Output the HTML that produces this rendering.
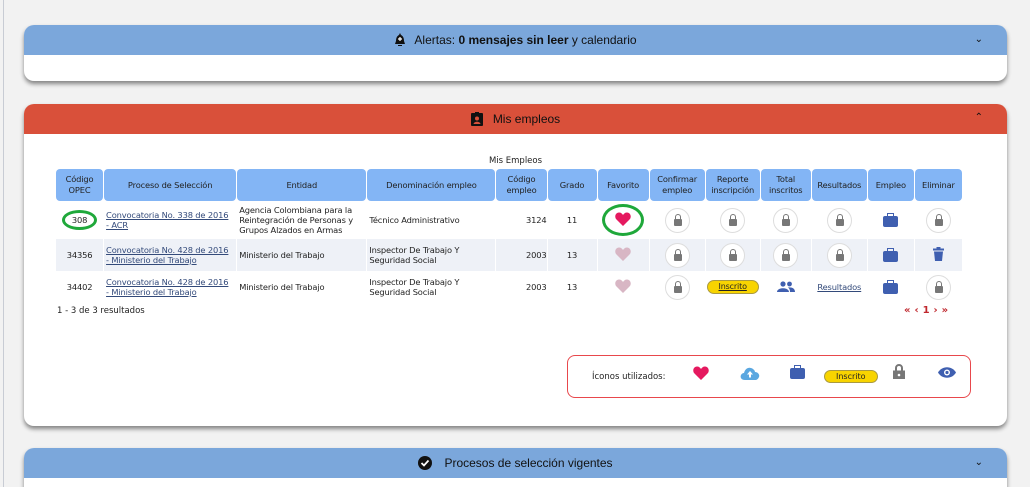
<!DOCTYPE html>
<html style="overflow:hidden;width:1030px;height:487px"><head><meta charset="utf-8"><style>
*{margin:0;padding:0;box-sizing:border-box}
body{width:1030px;height:487px;background:#f2f2f2;font-family:"DejaVu Sans","Liberation Sans",sans-serif;position:relative;overflow:hidden;color:#222}
.lb{position:absolute;left:3px;top:0;width:1px;height:487px;background:#c8ccd4}
.panel{position:absolute;left:24px;width:983px;background:#fff;border-radius:10px;box-shadow:0 3px 4px rgba(0,0,0,.45);overflow:hidden}
.hd{height:30px;display:flex;align-items:center;justify-content:center;font-family:"Liberation Sans",sans-serif;font-size:12px;position:relative;color:#111}
.hd .car{position:absolute;right:24px;top:9px;font-size:10px}
table{position:absolute;left:55px;top:169px;border-collapse:separate;border-spacing:1px 0;font-size:8.3px;letter-spacing:-0.15px;table-layout:fixed;width:908px}
th{background:#83b5f5;font-weight:normal;height:32px;border-radius:4px;line-height:11px;color:#222}
td{text-align:center;line-height:10px;overflow:hidden;white-space:nowrap}
td.l{text-align:left;padding-left:2px}
td.w{white-space:normal}
a{color:#334a7a}
.lk{display:inline-block;width:25px;height:25px;border-radius:50%;border:1px solid #ddd;position:relative;vertical-align:middle;background:#fff}
.lk:after{content:"";position:absolute;left:8px;top:10px;width:8px;height:7px;background:#777;border-radius:1px}
.lk:before{content:"";position:absolute;left:9px;top:5px;width:4px;height:6px;border:1.5px solid #777;border-bottom:none;border-radius:3px 3px 0 0}
.bag{display:inline-block;width:15px;height:11px;background:#3f5fb0;border-radius:2px;position:relative;vertical-align:middle;margin-top:3px}
.bag:before{content:"";position:absolute;left:4px;top:-3px;width:5px;height:3px;border:1.5px solid #3f5fb0;border-bottom:none}
.ins{display:inline-block;background:#f8d400;border:1px solid #aa9a40;border-radius:8px;padding:1px 11px;font-size:8px}
tr.g td{background:#eef1f7}
</style></head><body>
<div class="lb"></div>
<div class="panel" style="top:25px;height:56px"><div class="hd" style="background:#7ba7db">
<svg width="12" height="14" viewBox="0 0 12 14" style="margin-right:8px"><path d="M6 0 L7 2 C9 3 10 5 10 8 L11 11 L1 11 L2 8 C2 5 3 3 5 2Z M4 12 h4 v1 h-4z" fill="#111"/><path d="M6 4v4M4 6h4" stroke="#fff" stroke-width="1.2"/></svg>
Alertas:&nbsp;<b>0 mensajes sin leer</b>&nbsp;y calendario<span class="car">&#8964;</span></div></div>

<div class="panel" style="top:104px;height:322px"><div class="hd" style="background:#d9503a">
<svg width="12" height="14" viewBox="0 0 12 14" style="margin-right:10px"><rect x="0" y="1" width="12" height="13" rx="1" fill="#111"/><rect x="4" y="0" width="4" height="3" fill="#111"/><circle cx="6" cy="6.5" r="2" fill="#d9503a"/><path d="M2.5 12 C3 9 9 9 9.5 12Z" fill="#d9503a"/></svg>
Mis empleos<span class="car" style="top:8px">&#8963;</span></div>
<div style="position:absolute;left:0;width:983px;top:52px;text-align:center;font-size:8.5px">Mis Empleos</div>
<div style="position:absolute;left:33px;top:202px;font-size:8.5px">1 - 3 de 3 resultados</div>
<div style="position:absolute;left:880px;top:201px;font-size:10px;color:#c0282e;font-weight:bold;letter-spacing:4px">«‹1›»</div>
<div style="position:absolute;left:543px;top:251px;width:404px;height:43px;border:1px solid #e8484c;border-radius:8px;font-size:8.5px">
<span style="position:absolute;left:24px;top:16px">Íconos utilizados:</span>
<svg style="position:absolute;left:125px;top:10px" width="16" height="14" viewBox="0 0 16 14"><path d="M8 14 L1.5 7.5 C-1 5 0.5 0.5 4 0.5 C6 0.5 7 1.5 8 3 C9 1.5 10 0.5 12 0.5 C15.5 0.5 17 5 14.5 7.5Z" fill="#e5195f"/></svg>
<svg style="position:absolute;left:172px;top:11px" width="20" height="13" viewBox="0 0 20 13"><path d="M5 13 C1 13 0 10 1 8 C2 6 4 6 4 6 C5 2 8 0 11 1 C14 2 15 4 15 5 C18 5 20 8 19 10 C18 12 17 13 15 13Z" fill="#5aa7e0"/><path d="M10 4 L13 7.5 H11 V10.5 H9 V7.5 H7Z" fill="#fff"/></svg>
<span class="bag" style="position:absolute;left:222px;top:9px"></span>
<span class="ins" style="position:absolute;left:256px;top:14px">Inscrito</span>
<svg style="position:absolute;left:325px;top:8px" width="12" height="15" viewBox="0 0 12 15"><path d="M3 7 V4 a3 3 0 0 1 6 0 V7" fill="none" stroke="#777" stroke-width="2"/><rect x="0" y="6.5" width="12" height="8.5" fill="#777"/><circle cx="6" cy="11" r="1.3" fill="#fff"/></svg>
<svg style="position:absolute;left:370px;top:11px" width="18" height="11" viewBox="0 0 18 11"><path d="M0 5.5 C4 -1.5 14 -1.5 18 5.5 C14 12.5 4 12.5 0 5.5Z" fill="#3f5fb0"/><circle cx="9" cy="5.5" r="3" fill="#fff"/><circle cx="9" cy="5.5" r="1.6" fill="#3f5fb0"/></svg>
</div>
</div>

<table>
<colgroup><col style="width:47px"><col style="width:132px"><col style="width:129px"><col style="width:128px"><col style="width:50px"><col style="width:49px"><col style="width:51px"><col style="width:55px"><col style="width:54px"><col style="width:50px"><col style="width:55px"><col style="width:46px"><col style="width:47px"></colgroup>
<tr><th>Código<br>OPEC</th><th>Proceso de Selección</th><th>Entidad</th><th>Denominación empleo</th><th>Código<br>empleo</th><th>Grado</th><th>Favorito</th><th>Confirmar<br>empleo</th><th>Reporte<br>inscripción</th><th>Total<br>inscritos</th><th>Resultados</th><th>Empleo</th><th>Eliminar</th></tr>
<tr style="height:38px"><td><span style="display:inline-block;border:3px solid #1fa83a;border-radius:50%;padding:2px 7px">308</span></td><td class="l"><a href="#">Convocatoria No. 338 de 2016<br>- ACR</a></td><td class="l w">Agencia Colombiana para la Reintegración de Personas y Grupos Alzados en Armas</td><td class="l">Técnico Administrativo</td><td style="text-align:right">3124</td><td>11</td><td><span style="display:inline-block;border:3px solid #1fa83a;border-radius:50%;padding:5px 10px"><svg width="16" height="14" viewBox="0 0 16 14"><path d="M8 14 L1.5 7.5 C-1 5 0.5 0.5 4 0.5 C6 0.5 7 1.5 8 3 C9 1.5 10 0.5 12 0.5 C15.5 0.5 17 5 14.5 7.5Z" fill="#e5195f"/></svg></span></td><td><span class="lk"></span></td><td><span class="lk"></span></td><td><span class="lk"></span></td><td><span class="lk"></span></td><td><span class="bag"></span></td><td><span class="lk"></span></td></tr>
<tr class="g" style="height:32px"><td>34356</td><td class="l"><a href="#">Convocatoria No. 428 de 2016<br>- Ministerio del Trabajo</a></td><td class="l">Ministerio del Trabajo</td><td class="l">Inspector De Trabajo Y<br>Seguridad Social</td><td style="text-align:right">2003</td><td>13</td><td><svg width="16" height="14" viewBox="0 0 16 14"><path d="M8 14 L1.5 7.5 C-1 5 0.5 0.5 4 0.5 C6 0.5 7 1.5 8 3 C9 1.5 10 0.5 12 0.5 C15.5 0.5 17 5 14.5 7.5Z" fill="#d8b6c4"/></svg></td><td><span class="lk"></span></td><td><span class="lk"></span></td><td><span class="lk"></span></td><td><span class="lk"></span></td><td><span class="bag"></span></td><td><svg width="11" height="14" viewBox="0 0 11 14"><rect x="0" y="1.5" width="11" height="2" fill="#3f5fb0"/><rect x="3.5" y="0" width="4" height="2" fill="#3f5fb0"/><path d="M1 4.5 H10 L9 14 H2Z" fill="#3f5fb0"/></svg></td></tr>
<tr style="height:32px"><td>34402</td><td class="l"><a href="#">Convocatoria No. 428 de 2016<br>- Ministerio del Trabajo</a></td><td class="l">Ministerio del Trabajo</td><td class="l">Inspector De Trabajo Y<br>Seguridad Social</td><td style="text-align:right">2003</td><td>13</td><td><svg width="16" height="14" viewBox="0 0 16 14"><path d="M8 14 L1.5 7.5 C-1 5 0.5 0.5 4 0.5 C6 0.5 7 1.5 8 3 C9 1.5 10 0.5 12 0.5 C15.5 0.5 17 5 14.5 7.5Z" fill="#d8b6c4"/></svg></td><td><span class="lk"></span></td><td><span class="ins"><u>Inscrito</u></span></td><td><svg width="18" height="11" viewBox="0 0 18 11"><circle cx="6" cy="3" r="2.6" fill="#3f5fb0"/><circle cx="12.5" cy="3" r="2.4" fill="#3f5fb0"/><path d="M0 11 C0 6 12 6 12 11Z M11 6.5 C15 6 18 7.5 18 11 H13 C13 9 12.5 7.5 11 6.5Z" fill="#3f5fb0"/></svg></td><td><a href="#">Resultados</a></td><td><span class="bag"></span></td><td><span class="lk"></span></td></tr>
</table>

<div class="panel" style="top:448px;height:60px"><div class="hd" style="background:#7ba7db">
<svg width="14" height="14" viewBox="0 0 14 14" style="margin-right:12px"><circle cx="7" cy="7" r="7" fill="#111"/><path d="M3.5 7 L6 9.5 L10.5 4.5" stroke="#fff" stroke-width="1.8" fill="none"/></svg>
Procesos de selección vigentes<span class="car">&#8964;</span></div></div>
</body></html>
